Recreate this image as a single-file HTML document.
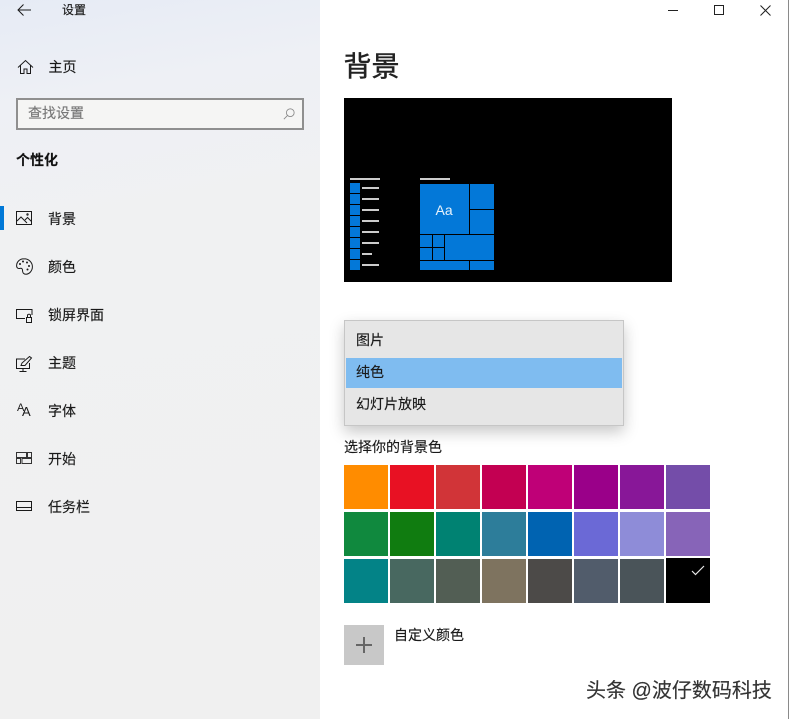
<!DOCTYPE html>
<html lang="zh">
<head>
<meta charset="utf-8">
<style>
html,body{margin:0;padding:0;width:789px;height:719px;overflow:hidden;background:#fff}
body{position:relative;font-family:"Liberation Sans","Noto Sans CJK SC",sans-serif;color:#1a1a1a}
.t{position:absolute;white-space:nowrap;font-size:14px;line-height:20px;-webkit-text-stroke:.15px currentColor}
#side{position:absolute;left:0;top:0;width:320px;height:719px;background:linear-gradient(170deg,#e6ebf5 0,#eef0f5 14%,#f0f1f2 32%,#f0f0f0 100%)}
#search{position:absolute;left:16px;top:98px;width:284px;height:28px;border:2px solid #8f8f8f;background:#f5f5f4}
.sw{position:absolute;width:44px;height:44px}
#menu{position:absolute;left:344px;top:320px;width:278px;height:104px;border:1px solid #c6c6c6;background:#e6e6e6;box-shadow:0 6px 14px rgba(0,0,0,.22)}
#sel{position:absolute;left:1px;top:37px;width:276px;height:30px;background:#7fbcf0}
svg{position:absolute;overflow:visible}
.ic{fill:none;stroke:#1a1a1a;stroke-width:1}
</style>
</head>
<body>
<div id="side"></div>

<svg class="ic" style="left:16px;top:2px" width="16" height="16" viewBox="0 0 16 16"><path d="M2 8H15M7.500 2.500L2 8l5.500 5.500"/></svg>
<div class="t" style="left:62px;top:0;font-size:12px">设置</div>

<svg class="ic" style="left:17px;top:59px" width="17" height="16" viewBox="0 0 17 16"><path d="M1 8.500L8.500 1.500l7.500 7M3.500 6.500V14.500H7V10h3v4.500h3.500V6.500"/></svg>
<div class="t" style="left:48.500px;top:57px">主页</div>

<div id="search"></div>
<div class="t" style="left:28px;top:103px;color:#777">查找设置</div>
<svg class="ic" style="left:283px;top:108px;stroke:#888" width="12" height="12" viewBox="0 0 14 14"><circle cx="8.500" cy="5.500" r="4.500"/><path d="M5.300 8.700L1 13"/></svg>

<div class="t" style="left:16px;top:150px;font-weight:bold;color:#111">个性化</div>

<div style="position:absolute;left:0;top:206px;width:4px;height:24px;background:#0078d7"></div>

<svg class="ic" style="left:16px;top:211px" width="16" height="14" viewBox="0 0 16 14"><path d="M.5.500h15v13H.5zM1 10l4-4 6 6M9 9l2.500-2.500 4 4"/><circle cx="11.500" cy="3.500" r=".7"/></svg>
<div class="t" style="left:48px;top:209px">背景</div>

<svg class="ic" style="left:16px;top:258px" width="17" height="17" viewBox="0 0 17 17"><path d="M8 .8C3.800.8.600 3.800.600 7.800c0 2.600 2 3 3.500 2.600 1.500-.4 2.400.4 2.400 1.800 0 1.600.6 4 3.500 4 3.300 0 6.400-3.400 6.400-7.400C16.400 4.400 12.800.8 8 .8z"/><g fill="#1a1a1a" stroke="none"><circle cx="4" cy="6" r="1"/><circle cx="7" cy="3.500" r="1"/><circle cx="11" cy="4.500" r="1"/><circle cx="13" cy="8" r="1"/><circle cx="11.500" cy="11.500" r="1"/></g></svg>
<div class="t" style="left:48px;top:257px">颜色</div>

<svg class="ic" style="left:16px;top:309px" width="17" height="14" viewBox="0 0 17 14"><path d="M9 9.500H.5V.5h15.500V6M10.500 8.500h5v5h-5zM11.500 8.500V6.500c0-1.600 3-1.600 3 0v2"/></svg>
<div class="t" style="left:48px;top:305px">锁屏界面</div>

<svg class="ic" style="left:16px;top:356px" width="17" height="16" viewBox="0 0 17 16"><path d="M9 3H.5v9.500h13V7M7 12.500V15M3.500 15.500h7M5 9.500l1-2.500 7.500-6.500 2 1.500-6.500 7.500z"/></svg>
<div class="t" style="left:48px;top:353px">主题</div>

<div class="t" style="left:17px;top:402px;font-size:11px;line-height:12px;-webkit-text-stroke:0;font-family:'Liberation Sans',sans-serif">A</div>
<div class="t" style="left:22px;top:405px;font-size:13px;line-height:14px;-webkit-text-stroke:0;font-family:'Liberation Sans',sans-serif">A</div>
<div class="t" style="left:48px;top:401px">字体</div>

<svg class="ic" style="left:16px;top:451px;stroke:#333" width="16" height="13" viewBox="0 0 16 13"><path d="M.5 1.500h10v5H.5zM11.500 1.500h4v5h-4zM.5 7.500h4v5h-4zM6 7.500h9.500v5H6z"/></svg>
<div class="t" style="left:48px;top:449px">开始</div>

<svg class="ic" style="left:16px;top:501px" width="16" height="10" viewBox="0 0 16 10"><path d="M.5.500h15v9H.5zM.5 6.500h15"/></svg>
<div class="t" style="left:48px;top:497px">任务栏</div>

<!-- window controls -->
<div style="position:absolute;left:668px;top:10px;width:10px;height:1px;background:#222"></div>
<div style="position:absolute;left:714px;top:5px;width:8px;height:8px;border:1px solid #222"></div>
<svg style="left:760px;top:5px" width="11" height="11" viewBox="0 0 11 11"><path d="M.5.500l10 10M10.500.5l-10 10" stroke="#222" fill="none"/></svg>
<div style="position:absolute;left:788px;top:0;width:1px;height:719px;background:#8a8a8a"></div>

<div class="t" style="left:343.500px;top:48px;font-size:28px;line-height:38px;color:#222;-webkit-text-stroke:.45px #222">背景</div>

<!-- preview -->
<svg style="left:344px;top:98px" width="328" height="184" viewBox="344 98 328 184">
<rect x="344" y="98" width="328" height="184" fill="#000"/>
<g fill="#ccc">
<rect x="350" y="178" width="30" height="2"/><rect x="420" y="178" width="30" height="2"/>
<rect x="362" y="187" width="17" height="2"/><rect x="362" y="198" width="17" height="2"/><rect x="362" y="209" width="17" height="2"/><rect x="362" y="220" width="17" height="2"/><rect x="362" y="231" width="17" height="2"/><rect x="362" y="242" width="17" height="2"/><rect x="362" y="253" width="10" height="2"/><rect x="362" y="264" width="17" height="2"/>
</g>
<g fill="#0378d8">
<rect x="350" y="183" width="10" height="10"/><rect x="350" y="194" width="10" height="10"/><rect x="350" y="205" width="10" height="10"/><rect x="350" y="216" width="10" height="10"/><rect x="350" y="227" width="10" height="10"/><rect x="350" y="238" width="10" height="10"/><rect x="350" y="249" width="10" height="10"/><rect x="350" y="260" width="10" height="10"/>
<rect x="420" y="184" width="49" height="50"/>
<rect x="470" y="184" width="24" height="25"/><rect x="470" y="210" width="24" height="24"/>
<rect x="420" y="235" width="12" height="12"/><rect x="433" y="235" width="11" height="12"/>
<rect x="420" y="248" width="12" height="12"/><rect x="433" y="248" width="11" height="12"/>
<rect x="445" y="235" width="49" height="25"/>
<rect x="420" y="261" width="49" height="9"/><rect x="470" y="261" width="24" height="9"/>
</g>
<text x="435.500" y="215" font-size="14" fill="#e8f2fb" font-family="Liberation Sans, sans-serif">Aa</text>
</svg>

<!-- dropdown -->
<div id="menu"><div id="sel"></div></div>
<div class="t" style="left:356px;top:330px">图片</div>
<div class="t" style="left:356px;top:362px">纯色</div>
<div class="t" style="left:356px;top:394px">幻灯片放映</div>

<div class="t" style="left:344px;top:437px">选择你的背景色</div>

<!-- swatches -->
<div class="sw" style="left:344px;top:465px;background:#ff8c00"></div>
<div class="sw" style="left:390px;top:465px;background:#e81123"></div>
<div class="sw" style="left:436px;top:465px;background:#d13438"></div>
<div class="sw" style="left:482px;top:465px;background:#c30052"></div>
<div class="sw" style="left:528px;top:465px;background:#bf0077"></div>
<div class="sw" style="left:574px;top:465px;background:#9a0089"></div>
<div class="sw" style="left:620px;top:465px;background:#881798"></div>
<div class="sw" style="left:666px;top:465px;background:#744da9"></div>
<div class="sw" style="left:344px;top:512px;background:#10893e"></div>
<div class="sw" style="left:390px;top:512px;background:#107c10"></div>
<div class="sw" style="left:436px;top:512px;background:#008272"></div>
<div class="sw" style="left:482px;top:512px;background:#2d7d9a"></div>
<div class="sw" style="left:528px;top:512px;background:#0063b1"></div>
<div class="sw" style="left:574px;top:512px;background:#6b69d6"></div>
<div class="sw" style="left:620px;top:512px;background:#8e8cd8"></div>
<div class="sw" style="left:666px;top:512px;background:#8764b8"></div>
<div class="sw" style="left:344px;top:559px;background:#038387"></div>
<div class="sw" style="left:390px;top:559px;background:#486860"></div>
<div class="sw" style="left:436px;top:559px;background:#525e54"></div>
<div class="sw" style="left:482px;top:559px;background:#7e735f"></div>
<div class="sw" style="left:528px;top:559px;background:#4c4a48"></div>
<div class="sw" style="left:574px;top:559px;background:#515c6b"></div>
<div class="sw" style="left:620px;top:559px;background:#4a5459"></div>
<div class="sw" style="left:666px;top:558px;height:45px;background:#000"></div>
<svg style="left:691px;top:565px" width="14" height="11" viewBox="0 0 14 11"><path d="M1 6l3.500 3.500L13 1" stroke="#e8e8e8" stroke-width="1.200" fill="none"/></svg>

<!-- custom colour -->
<div style="position:absolute;left:344px;top:625px;width:40px;height:40px;background:#c8c8c8"></div>
<div style="position:absolute;left:356px;top:644px;width:16px;height:2px;background:#666"></div>
<div style="position:absolute;left:363px;top:637px;width:2px;height:16px;background:#666"></div>
<div class="t" style="left:394px;top:625px">自定义颜色</div>

<div class="t" style="left:586px;top:679px;font-size:20px;line-height:24px;color:#333;text-shadow:0 1px 0 #fff,1px 0 0 #fff">头条 @波仔数码科技</div>
</body>
</html>
